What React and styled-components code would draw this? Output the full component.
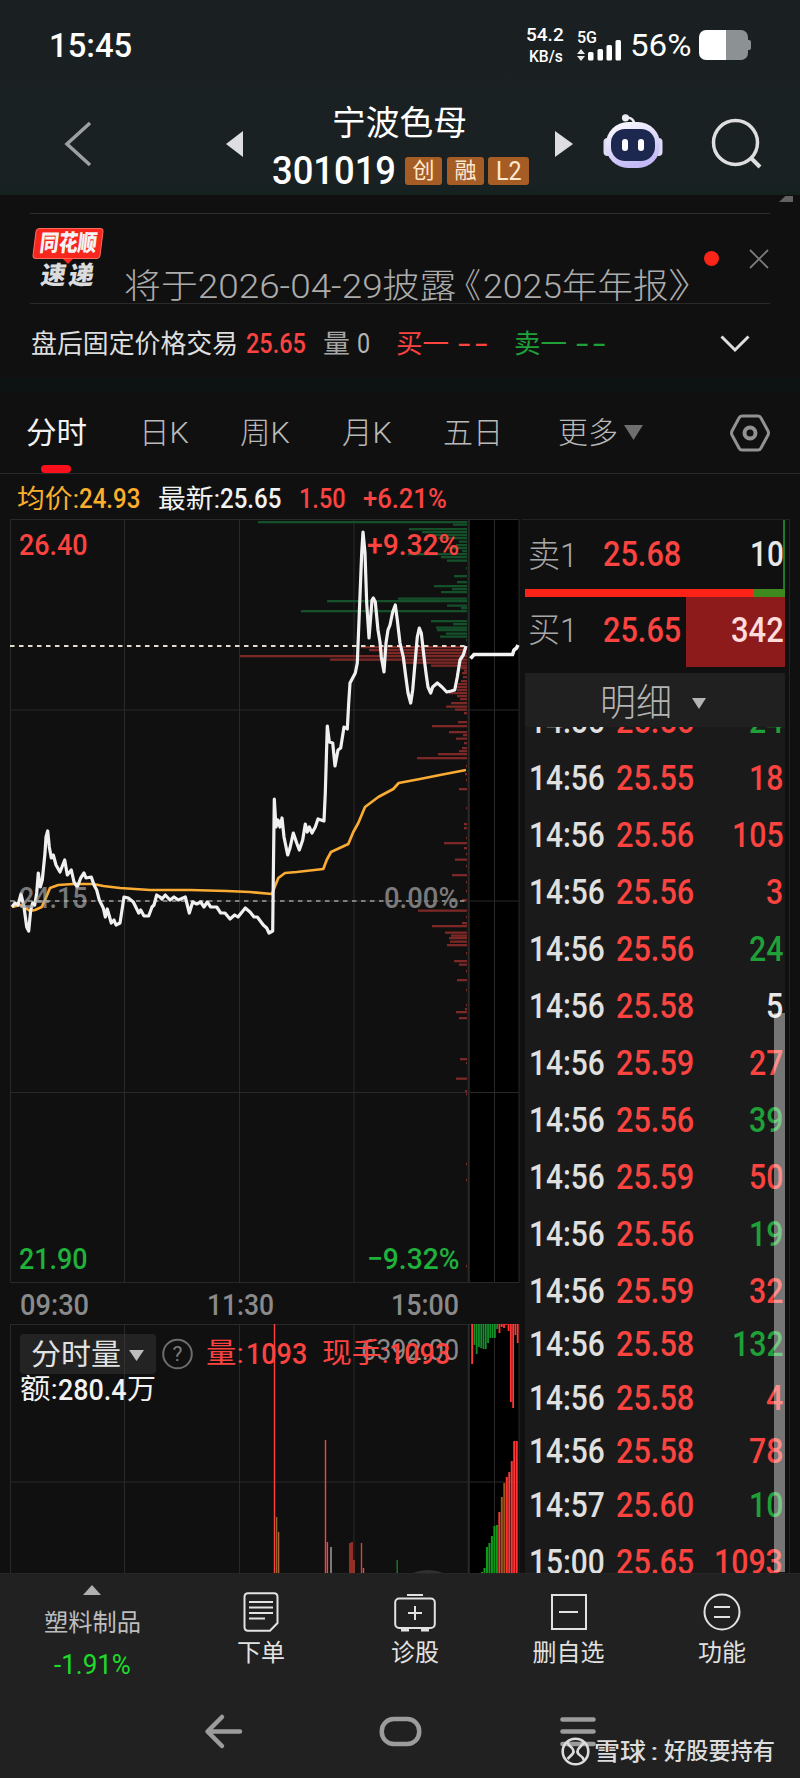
import { useLayoutEffect, useRef, useState } from 'react';
import styled, { createGlobalStyle } from 'styled-components';

const RED = '#fb4340';
const GREEN = '#1fa038';

const GlobalStyle = createGlobalStyle`
  * {
    box-sizing: border-box;
  }

  body {
    margin: 0;
    background: #101010;
    font-family: Roboto, 'Noto Sans CJK SC', sans-serif;
    color: #e8e8e8;
  }

  svg {
    display: block;
    flex: none;
  }
`;

const Page = styled.div`
  width: 800px;
  height: 1778px;
  overflow: hidden;
  display: flex;
  flex-direction: column;
`;

/* condensed text: squeezed to a fixed column width */
const FitBox = styled.span`
  flex: none;
  display: block;
  width: ${(p) => p.$w}px;
  margin-left: ${(p) => p.$ml || 0}px;
  color: ${(p) => p.$color || 'inherit'};
  font-size: ${(p) => p.$size}px;
  font-weight: ${(p) => p.$weight || 400};
  line-height: ${(p) => p.$size + 4}px;
  height: ${(p) => p.$size + 4}px;
`;

const FitText = styled.span`
  display: inline-block;
  white-space: nowrap;
  transform-origin: 0 50%;
`;

const Fit = ({ w, ml, size, color, weight, children }) => {
  const ref = useRef(null);
  const [scale, setScale] = useState(1);

  useLayoutEffect(() => {
    setScale(w / ref.current.offsetWidth);
  }, [w, children]);

  return (
    <FitBox $w={w} $ml={ml} $size={size} $color={color} $weight={weight}>
      <FitText ref={ref} style={{ transform: `scaleX(${scale})` }}>
        {children}
      </FitText>
    </FitBox>
  );
};

const Header = styled.header`
  height: 195px;
  flex: none;
  background: linear-gradient(#1a2022 0, #1a2123 180px, #14211f 195px);
  color: #fff;
`;

const StatusBar = styled.div`
  height: 89px;
  display: flex;
  align-items: center;
  padding-left: 49px;
`;

const NetSpeed = styled.div`
  width: 38px;
  margin-left: 394px;
`;

const Cell = styled.div`
  width: 46px;
  margin-left: 12px;
`;

const Battery = styled.div`
  width: 49px;
  height: 30px;
  margin-left: 8px;
  border-radius: 7px;
  background: linear-gradient(90deg, #fff 27px, #8c9194 27px);
`;

const BatteryCap = styled.div`
  width: 2.5px;
  height: 10px;
  border-radius: 0 2px 2px 0;
  background: #8c9194;
`;

const TitleBar = styled.div`
  height: 106px;
  display: flex;
  align-items: flex-start;
  padding-left: 64px;
`;

const HeadIcon = styled.div`
  margin-left: ${(p) => p.$ml || 0}px;
  margin-top: ${(p) => p.$mt}px;
`;

const Stock = styled.div`
  width: 258px;
  margin-left: 29px;
  padding-top: 15px;
`;

const StockName = styled.div`
  padding-left: 60px;
`;

const StockCode = styled.div`
  display: flex;
  align-items: center;
  height: 44px;
  margin-top: 7px;
`;

const Badge = styled.div`
  width: ${(p) => p.$w}px;
  height: 28px;
  margin-left: ${(p) => p.$ml}px;
  border-radius: 3px;
  background: #a65d25;
  color: #ffe9d0;
  display: flex;
  align-items: center;
  justify-content: center;
`;

const Notice = styled.div`
  position: relative;
  height: 109px;
  flex: none;
  display: flex;
  align-items: flex-start;
  padding: 18px 30px 0;
`;

const NoticeInner = styled.div`
  width: 740px;
  height: 91px;
  display: flex;
  align-items: flex-start;
  border-top: 1px solid #2d2d2d;
  border-bottom: 1px solid #2a2a2a;
`;

const Corner = styled.div`
  position: absolute;
  top: 1px;
  right: 7px;
  width: 14px;
  height: 6px;
  background: #626262;
  clip-path: polygon(0 100%, 45% 0, 100% 0, 100% 100%);
`;

const Logo = styled.div`
  width: 72px;
  margin: 14px 0 0 2px;
  display: flex;
  flex-direction: column;
  align-items: center;
`;

const LogoTop = styled.div`
  width: 68px;
  height: 31px;
  border-radius: 4px;
  border: 1px solid #ff6a5c;
  background: #f8261c;
  transform: skewX(-7deg);
  display: flex;
  justify-content: center;
  align-items: center;
`;

const LogoTip = styled.div`
  border: 5px solid transparent;
  border-top-color: #f8261c;
  border-bottom: 0;
`;

const LogoBottom = styled.div`
  display: flex;
  transform: skewX(-9deg);
  margin: -3px 2px 0 0;
`;

const NoticeText = styled.div`
  display: flex;
  padding: 53px 0 0 20px;
`;

const Dot = styled.div`
  width: 15px;
  height: 15px;
  margin: 37px 0 0 -8px;
  border-radius: 50%;
  background: #fb2418;
`;

const AfterHours = styled.div`
  height: 74px;
  flex: none;
  display: flex;
  align-items: center;
  padding: 6px 0 0 30px;
`;

const Band = styled.div`
  height: 14px;
  flex: none;
  background: #0d1312;
`;

const Tabs = styled.div`
  height: 82px;
  flex: none;
  display: flex;
  align-items: center;
  padding-left: 26px;
  border-bottom: 1px solid #2b2b2b;
  color: #b9b9b9;
`;

const ActiveTab = styled.div`
  height: 81px;
  display: flex;
  flex-direction: column;
  padding-top: 24px;

  &::after {
    content: '';
    width: 30px;
    height: 8px;
    margin: auto 0 0 15px;
    border-radius: 4px;
    background: #fb0f1c;
  }
`;

const Stats = styled.div`
  height: 45px;
  flex: none;
  display: flex;
  align-items: center;
  padding: 4px 0 0 17px;
`;

const Main = styled.main`
  height: 1054px;
  flex: none;
  display: flex;
`;

const Left = styled.div`
  width: 522px;
  flex: none;
`;

const ChartBox = styled.div`
  position: relative;
  height: ${(p) => p.$h}px;
`;

const ChartLabel = styled.div`
  position: absolute;
  top: ${(p) => p.$top}px;
  left: ${(p) => p.$left}px;
`;

const Axis = styled.div`
  height: 41px;
  display: flex;
  align-items: center;
  padding: 3px 0 0 20px;
`;

const VolumeHead = styled.div`
  position: absolute;
  top: 10px;
  left: 20px;
`;

const VolumeRow = styled.div`
  display: flex;
  align-items: center;
  height: ${(p) => p.$h}px;
`;

const Select = styled.div`
  width: 136px;
  height: 40px;
  display: flex;
  align-items: center;
  padding: 2px 0 0 11px;
  border-radius: 4px;
  background: rgba(60, 60, 60, 0.45);
`;

const Right = styled.div`
  width: 268px;
  padding-left: 2.5px;
  border-top: 1px solid #222;
  border-right: 1px solid #242424;
`;

const Quote = styled.div`
  width: 260px;
  height: ${(p) => p.$h}px;
  display: flex;
  align-items: center;
  padding: 0 0 0 3px;
  border-right: 2px solid ${(p) => p.$edge || 'transparent'};
`;

const QuoteVol = styled.div`
  width: 99px;
  height: 100%;
  margin-left: auto;
  margin-right: -2px;
  padding-right: 1px;
  display: flex;
  align-items: center;
  justify-content: flex-end;
  background: ${(p) => p.$bg || 'none'};
`;

const RatioBar = styled.div`
  width: 260px;
  height: 8px;
  background: linear-gradient(90deg, #fb2218 228px, #3f8a1f 228px);
`;

/* lifts the line a little above the middle of its row */
const Raised = styled.div`
  padding-bottom: 4px;
`;

const DetailHead = styled.div`
  width: 260px;
  height: 54px;
  margin-top: 6px;
  padding: 7px 0 0 75px;
  display: flex;
  align-items: center;
  background: #202020;
  color: #b4b4b4;
`;

const Trades = styled.div`
  position: relative;
  width: 260px;
  height: 846px;
  overflow: hidden;
  background: #1a1a1a;
`;

const Trade = styled.div`
  display: flex;
  align-items: center;
  height: 46px;
  margin-top: ${(p) => p.$gap}px;
  padding: 0 1px 0 4px;
`;

const TradeVol = styled.div`
  margin-left: auto;
`;

const ScrollThumb = styled.div`
  position: absolute;
  right: 0;
  top: 286px;
  bottom: 1px;
  width: 11px;
  background: rgba(255, 255, 255, 0.4);
`;

const Toolbar = styled.footer`
  height: 120px;
  flex: none;
  display: flex;
  background: #212121;
  border-top: 1px solid #262626;
`;

const Tool = styled.div`
  width: ${(p) => p.$w}px;
  display: flex;
  flex-direction: column;
  align-items: center;
  padding-top: ${(p) => p.$top}px;
`;

const ToolIcon = styled.div`
  height: 47px;
`;

const SystemBar = styled.div`
  flex: 1;
  position: relative;
  display: flex;
  align-items: flex-start;
  padding: 20px 0 0 204px;
  background: #212121;
`;

const Watermark = styled.div`
  position: absolute;
  left: 560px;
  top: 43px;
  display: flex;
  align-items: center;
  color: #dcdcdc;
`;

const trades = [
  ['14:56', '25.56', '24', GREEN],
  ['14:56', '25.55', '18', RED],
  ['14:56', '25.56', '105', RED],
  ['14:56', '25.56', '3', RED],
  ['14:56', '25.56', '24', GREEN],
  ['14:56', '25.58', '5', '#e8e8e8'],
  ['14:56', '25.59', '27', RED],
  ['14:56', '25.56', '39', GREEN],
  ['14:56', '25.59', '50', RED],
  ['14:56', '25.56', '19', GREEN],
  ['14:56', '25.59', '32', RED],
  ['14:56', '25.58', '132', GREEN],
  ['14:56', '25.58', '4', RED],
  ['14:56', '25.58', '78', RED],
  ['14:57', '25.60', '10', GREEN],
  ['15:00', '25.65', '1093', RED],
];

const tradeGap = (i) => {
  if (i === 0) return -28.5;
  return i > 10 && i < 15 ? 7.4 : 11;
};

const pricePoints =
  '12,907 15,903 18,905 21,894 24,907 26.7,927 28.7,931 30.7,910 32.7,903 34.7,905 36.7,893 38.3,873 40.3,887 42.3,880 45,853 46,837 47.7,831 49.3,847 51.3,858 53.3,855 56,865 60,872 64.7,860 67.3,875 71.3,870 74,882 77.3,887 80.7,878 84,873 86,878 91.3,877 94,885 96.7,890 99.3,900 103.3,908 105.3,917 107.3,909 111.3,923 114,920 116,925 120,923 122,910 124,897 128.3,898 133.3,902 138.7,913 140.7,910 144,916 148.7,916 152,907 154,905 156.7,895 160,897 162,899 165.3,895 170,900 174,897 178.3,900 185.3,897 189.3,913 192.7,902 196.7,904 200.7,902 204,907 207.3,902 210.7,907 216.7,907 220.7,913 225,913 230,919 234.7,915 238,917 245.3,908 250,912 254,917 257.3,917 263.3,925 266.7,928 269,933 272.7,931 273.3,877 274.3,799 276,827 278,820 280,827 282,818 284,837 287.7,855 290,848 293.3,833 296.7,843 299.3,850 302.7,840 305.3,824 307.3,832 309.3,827 312,833 315.3,827 318,819 324,821 325.3,793 327.3,726 329.3,742 332.7,743 335,766 338,750 340.7,748 344,727 347.3,729 348.7,703 350,683 355.3,673 357.3,663 359.3,613 361.7,553 363,532 365,553 366.7,603 369,638 370.7,617 372,600 373.3,598 375.3,602 378,630 380,642 381.3,657 384,672 386,643 388,630 390,625 392.7,612 395.3,605 397.3,620 400,643 403.3,657 405.3,673 408,693 410.7,703 412.7,690 415.3,660 417.3,637 419.3,628 421.3,633 424,657 426,673 428,687 430.7,693 432.7,687 437.3,683 442,687 446.7,692 451.3,691 454.7,690 457.3,677 460,660 463.3,655 466,646';

const avgPoints =
  '12,907 20,905 24,907 30,911 35,910 41.7,907 45,900 50,888 58.3,885 73.3,884 93.3,884 103.3,886 120,888 150,890 190,890 226.7,891 250,892 272,894 274.7,887 278.3,878 285,873 296.7,872 323.3,869 326.7,860 331,852 348.3,844 353.3,832 358.3,823 365,807 378.3,797 393.3,789 398.7,783 420,779 440,775 466,770';

// [y, left edge] of each horizontal chip bar, all ending at x = 467
const greenChips = [
  [522, 258], [524.5, 453], [529, 409], [532, 422], [535, 430], [538, 438], [541.5, 459], [545, 456], [548, 448],
  [551, 462], [554, 408], [557, 441], [560.5, 447], [568, 466], [576, 454], [582, 457], [586, 434], [589, 452],
  [592, 441], [598.5, 398], [601, 327], [605.5, 447], [608, 461], [611, 301], [621, 431], [624, 453], [627.5, 436],
  [630, 437], [633.5, 446], [636.5, 440], [640, 466],
];
const redChips = [
  [647, 361], [650, 369], [653, 380], [656, 240], [659.5, 330], [662.5, 402], [665.5, 431], [668, 461], [670.5, 464],
  [673, 462], [677, 463], [681, 461], [684, 458], [687, 456], [690, 457], [693, 449], [696, 457], [699, 460],
  [703, 451], [706.5, 446], [709.5, 455], [713, 464], [722, 458], [726, 432], [732, 449], [735, 463], [738.5, 456],
  [743, 464], [748, 462], [751, 459], [754, 438], [758, 417], [766, 466], [774, 465], [780, 466], [789, 459],
  [808, 466], [824, 464], [828, 464], [838, 466], [843, 444], [848, 464], [854, 466], [859.5, 455], [866, 466],
  [875, 452], [882, 466], [891, 466], [900, 462], [910.5, 418], [917, 466], [923, 462], [926, 432], [932.5, 445],
  [935.5, 451], [938, 449], [941.5, 450], [945, 447], [953, 466], [961, 454], [964.5, 459], [971, 466], [980, 457],
  [990, 466], [1005, 466], [1009, 465], [1012, 456], [1018, 459], [1059, 460], [1063, 466], [1078.5, 456],
  [1091, 465], [1094, 466], [1164, 466], [1180, 466], [1266, 466],
];

const upper = [
  1364, 1345, 1354, 1347, 1348, 1349, 1349, 1343, 1338, 1338, 1338, 1329, 1333, 1327, 1328, 1325, 1331, 1402, 1408,
  1335, 1343,
];
const lower = [1572, 1568, 1547, 1543, 1536, 1526, 1525, 1512, 1497, 1483, 1477, 1472, 1461, 1441, 1441];

const lowerColor = (i) => {
  if (i < 7) return '#0f9a1c';
  return i === 8 || i === 9 ? '#9a5a1c' : '#ff3734';
};

// [x, top, color]
const volumes = [
  [274.5, 1324, RED],
  [276.6, 1517, '#8a6a28'],
  [278.6, 1532, '#b0633a'],
  [325.5, 1440, RED],
  [327.4, 1542, RED],
  [331, 1547, '#a8a8a8'],
  [350, 1543, '#d23a32'],
  [352, 1542, '#d23a32'],
  [354, 1560, '#b8452e'],
  [361.5, 1543, '#d2463a'],
  [363.5, 1568, RED],
  [397.2, 1560, '#1c7a2a'],
];

const PriceChart = () => (
  <svg width="522" height="764" viewBox="0 519 522 764">
    <rect x="470" y="519" width="49" height="764" fill="#000" />
    <g stroke="#292929" fill="none">
      <path d="M10.5 519.5H519V1282.5H10.5Z" />
      <path d="M10 710H519M10 901H519M10 1092.5H519" />
      <path d="M124.5 519V1283M239.5 519V1283M354 519V1283M494.5 519V1283" />
      <path d="M468.7 519V1283" strokeWidth="2" />
    </g>
    <g fill="#14502a">
      {greenChips.map(([y, x]) => (
        <rect key={y} x={x} y={y - 1} width={467 - x} height="2.3" />
      ))}
    </g>
    <g fill="#7c2826">
      {redChips.map(([y, x]) => (
        <rect key={y} x={x} y={y - 1} width={467 - x} height="2.3" />
      ))}
    </g>
    <path d="M10 646H467" stroke="#e4dccb" strokeWidth="1.8" strokeDasharray="4.5 4.5" />
    <path d="M10 901H467" stroke="#a0a0a0" strokeWidth="1.5" strokeDasharray="4.5 4.5" />
    <polyline points={avgPoints} fill="none" stroke="#f9ab33" strokeWidth="2.7" strokeLinejoin="round" />
    <polyline points={pricePoints} fill="none" stroke="#f0f0f0" strokeWidth="3.2" strokeLinejoin="round" />
    <path
      d="M470.5 658.5L474 654.5H512.5L514 650L516.5 648L518 645"
      fill="none"
      stroke="#f4f4f4"
      strokeWidth="3.6"
    />
  </svg>
);

const VolumeChart = () => (
  <svg width="522" height="249" viewBox="0 1324 522 249">
    <rect x="470" y="1324" width="49" height="249" fill="#000" />
    <g stroke="#292929" fill="none">
      <path d="M10.5 1573V1324.5H519V1573" />
      <path d="M10 1482H519" />
      <path d="M124.5 1324V1573M239.5 1324V1573M354 1324V1573M494.5 1324V1573" />
      <path d="M468.7 1324V1573" strokeWidth="2" />
    </g>
    <ellipse cx="428" cy="1590" rx="28" ry="20" fill="#303030" />
    {volumes.map(([x, y, color]) => (
      <rect key={x} x={x - 0.7} y={y} width="1.4" height={1573 - y} fill={color} />
    ))}
    {upper.map((y, i) => (
      <rect
        key={i}
        x={471.2 + i * 2.28}
        y="1324"
        width="1.8"
        height={y - 1324}
        fill={i > 0 && i < 12 ? '#138f2b' : '#ff3734'}
      />
    ))}
    {lower.map((y, i) => (
      <rect key={i} x={481 + i * 2.48} y={y} width="2" height={1573 - y} fill={lowerColor(i)} />
    ))}
  </svg>
);

const Robot = () => (
  <svg width="60" height="56" viewBox="0 0 60 56">
    <defs>
      <linearGradient id="shell" x1="0" y1="0" x2="0.4" y2="1">
        <stop offset="0" stopColor="#ffffff" />
        <stop offset="0.6" stopColor="#dcd6fa" />
        <stop offset="1" stopColor="#c3baf6" />
      </linearGradient>
    </defs>
    <path d="M31 12C32 6 28 3 23 4" fill="none" stroke="#e9e9f2" strokeWidth="2.5" />
    <circle cx="22.5" cy="3.8" r="3.6" fill="#ececf4" />
    <rect x="0.5" y="24" width="8" height="18" rx="4" fill="#dedcf4" />
    <rect x="51.5" y="24" width="8" height="18" rx="4" fill="#dedcf4" />
    <rect x="3" y="8" width="54" height="46" rx="22" fill="url(#shell)" />
    <rect x="8" y="15" width="44" height="32" rx="14" fill="#1d2850" />
    <rect x="19" y="25" width="6" height="12" rx="3" fill="#fff" />
    <rect x="35" y="25" width="6" height="12" rx="3" fill="#fff" />
  </svg>
);

const Triangle = ({ color, w, h, up }) => (
  <svg width={w} height={h} viewBox="0 0 10 10" preserveAspectRatio="none">
    <path d={up ? 'M0 10L5 0L10 10Z' : 'M0 0L5 10L10 0Z'} fill={color} />
  </svg>
);

const Spacer = styled.div`
  flex: none;
  width: ${(p) => p.$w || 0}px;
  height: ${(p) => p.$h || 0}px;
`;

const App = () => (
  <Page>
    <GlobalStyle />
    <Header>
      <StatusBar>
        <Fit w={83} size={34} weight={500}>15:45</Fit>
        <NetSpeed>
          <Fit w={38} size={19} weight={500}>54.2</Fit>
          <Spacer $h={-5} />
          <Fit w={34} size={17} weight={500} ml={3}>KB/s</Fit>
        </NetSpeed>
        <Cell>
          <svg width="46" height="34" viewBox="576 27 46 34">
            <text
              x="577"
              y="42"
              fill="#fff"
              fontFamily="Roboto, sans-serif"
              fontSize="17"
              fontWeight="500"
              textLength="20"
              lengthAdjust="spacingAndGlyphs"
            >
              5G
            </text>
            <path d="M577 53L581 48L585 53ZM577 55L581 60L585 55Z" fill="#e8e8e8" />
            <rect x="588" y="51" width="5.5" height="8.5" rx="1.5" fill="#fff" />
            <rect x="597.5" y="48" width="5.5" height="11.5" rx="1.5" fill="#fff" />
            <rect x="606.5" y="44" width="5.5" height="15.5" rx="1.5" fill="#fff" />
            <rect x="615.5" y="39" width="5.5" height="20.5" rx="1.5" fill="#fff" />
          </svg>
        </Cell>
        <Fit w={61} size={32} ml={8}>56%</Fit>
        <Battery />
        <BatteryCap />
      </StatusBar>
      <TitleBar>
        <HeadIcon $mt={32}>
          <svg width="28" height="46" viewBox="0 0 28 46">
            <path d="M26 2L3 23L26 44" fill="none" stroke="#9d9fa0" strokeWidth="3.5" />
          </svg>
        </HeadIcon>
        <HeadIcon $ml={134} $mt={42}>
          <svg width="17" height="26" viewBox="0 0 17 26">
            <path d="M17 0V26L0 13Z" fill="#dedde0" />
          </svg>
        </HeadIcon>
        <Stock>
          <StockName>
            <Fit w={135} size={34}>宁波色母</Fit>
          </StockName>
          <StockCode>
            <Fit w={124} size={39} weight={500}>301019</Fit>
            <Badge $w={37} $ml={9}>
              <Fit w={22} size={22}>创</Fit>
            </Badge>
            <Badge $w={37} $ml={5}>
              <Fit w={22} size={22}>融</Fit>
            </Badge>
            <Badge $w={41} $ml={4}>
              <Fit w={26} size={25}>L2</Fit>
            </Badge>
          </StockCode>
        </Stock>
        <HeadIcon $ml={25} $mt={42}>
          <svg width="18" height="26" viewBox="0 0 18 26">
            <path d="M0 0V26L18 13Z" fill="#dedde0" />
          </svg>
        </HeadIcon>
        <HeadIcon $ml={30} $mt={25}>
          <Robot />
        </HeadIcon>
        <HeadIcon $ml={48} $mt={29}>
          <svg width="52" height="52" viewBox="0 0 52 52">
            <circle cx="24.5" cy="24.5" r="22" fill="none" stroke="#dedede" strokeWidth="3.5" />
            <path d="M40 40L49 49" stroke="#dedede" strokeWidth="4" />
          </svg>
        </HeadIcon>
      </TitleBar>
    </Header>

    <Notice>
      <NoticeInner>
        <Logo>
          <LogoTop>
            <Fit w={57} size={23} weight={900} color="#f4f4f4">同花顺</Fit>
          </LogoTop>
          <LogoTip />
          <LogoBottom>
            <Fit w={25} size={25} weight={900} color="#dcdcdc">速</Fit>
            <Fit w={25} size={25} weight={900} color="#dcdcdc" ml={3}>递</Fit>
          </LogoBottom>
        </Logo>
        <NoticeText>
          <Fit w={332} size={34} weight={300} color="#acacac">将于2026-04-29披露</Fit>
          <Fit w={33} size={34} weight={300} color="#acacac" ml={-8}>《</Fit>
          <Fit w={185} size={34} weight={300} color="#acacac" ml={2}>2025年年报</Fit>
          <Fit w={44} size={34} weight={300} color="#acacac">》</Fit>
        </NoticeText>
        <Dot />
        <Spacer $w={30} />
        <HeadIcon $mt={35}>
          <svg width="20" height="20" viewBox="0 0 20 20">
            <path d="M1 1L19 19M19 1L1 19" stroke="#7a7a7a" strokeWidth="1.8" />
          </svg>
        </HeadIcon>
      </NoticeInner>
      <Corner />
    </Notice>

    <AfterHours>
      <Fit w={207} size={26} color="#dedede" ml={1}>盘后固定价格交易</Fit>
      <Fit w={60} size={27} weight={500} color={RED} ml={8}>25.65</Fit>
      <Fit w={27} size={26} color="#a6a6a6" ml={17}>量</Fit>
      <Fit w={13} size={27} color="#b4b4b4" ml={7}>0</Fit>
      <Fit w={53} size={26} color={RED} ml={26}>买一</Fit>
      <Fit w={30} size={30} color={RED} ml={9}>-&#8202;-</Fit>
      <Fit w={53} size={26} color={GREEN} ml={26}>卖一</Fit>
      <Fit w={30} size={30} color={GREEN} ml={9}>-&#8202;-</Fit>
      <Spacer $w={114} />
      <svg width="30" height="18" viewBox="0 0 30 18">
        <path d="M1.5 1.5L15 15L28.5 1.5" fill="none" stroke="#dedede" strokeWidth="3" />
      </svg>
    </AfterHours>
    <Band />

    <Tabs>
      <ActiveTab>
        <Fit w={61} size={30} color="#f2f2f2">分时</Fit>
      </ActiveTab>
      <Fit w={50} size={30} weight={300} ml={52}>日K</Fit>
      <Fit w={50} size={30} weight={300} ml={51}>周K</Fit>
      <Fit w={50} size={30} weight={300} ml={52}>月K</Fit>
      <Fit w={60} size={30} weight={300} ml={51}>五日</Fit>
      <Fit w={60} size={30} weight={300} ml={55}>更多</Fit>
      <Spacer $w={6} />
      <Triangle w={19} h={15} color="#6e6e6e" />
      <Spacer $w={87} />
      <svg width="40" height="38" viewBox="0 0 40 38">
        <path
          d="M12 2H28Q30 2 31 4L38 17Q39 19 38 21L31 34Q30 36 28 36H12Q10 36 9 34L2 21Q1 19 2 17L9 4Q10 2 12 2Z"
          fill="none"
          stroke="#929292"
          strokeWidth="3"
        />
        <circle cx="20" cy="19" r="5.5" fill="none" stroke="#929292" strokeWidth="4" />
      </svg>
    </Tabs>

    <Stats>
      <Fit w={62} size={26} color="#fbae2c">均价:</Fit>
      <Fit w={61} size={28} weight={500} color="#fbae2c">24.93</Fit>
      <Fit w={62} size={26} color="#f2f2f2" ml={18}>最新:</Fit>
      <Fit w={61} size={28} weight={500} color="#f2f2f2">25.65</Fit>
      <Fit w={47} size={28} weight={500} color={RED} ml={18}>1.50</Fit>
      <Fit w={84} size={28} weight={500} color={RED} ml={17}>+6.21%</Fit>
    </Stats>

    <Main>
      <Left>
        <ChartBox $h={764}>
          <PriceChart />
          <ChartLabel $top={9} $left={19}>
            <Fit w={69} size={30} weight={500} color={RED}>26.40</Fit>
          </ChartLabel>
          <ChartLabel $top={9} $left={367}>
            <Fit w={92} size={30} weight={500} color={RED}>+9.32%</Fit>
          </ChartLabel>
          <ChartLabel $top={362} $left={19}>
            <Fit w={69} size={30} weight={500} color="rgba(170,170,170,.7)">24.15</Fit>
          </ChartLabel>
          <ChartLabel $top={362} $left={384}>
            <Fit w={75} size={30} weight={500} color="#7a7a7a">0.00%</Fit>
          </ChartLabel>
          <ChartLabel $top={723} $left={19}>
            <Fit w={69} size={30} weight={500} color="#1fb13c">21.90</Fit>
          </ChartLabel>
          <ChartLabel $top={723} $left={367}>
            <Fit w={92} size={30} weight={500} color="#1fb13c">−9.32%</Fit>
          </ChartLabel>
        </ChartBox>
        <Axis>
          <Fit w={69} size={30} weight={500} color="#8a8a8a">09:30</Fit>
          <Fit w={67} size={30} weight={500} color="#8a8a8a" ml={118}>11:30</Fit>
          <Fit w={68} size={30} weight={500} color="#8a8a8a" ml={117}>15:00</Fit>
        </Axis>
        <ChartBox $h={249}>
          <VolumeChart />
          <ChartLabel $top={9} $left={361}>
            <Fit w={98} size={30} color="#8a8a8a">6392.00</Fit>
          </ChartLabel>
          <VolumeHead>
            <VolumeRow $h={40}>
              <Select>
                <Fit w={90} size={29} color="#e2e2e2">分时量</Fit>
                <Spacer $w={8} />
                <Triangle w={15} h={11} color="#bdbdbd" />
              </Select>
              <Spacer $w={6} />
              <svg width="32" height="32" viewBox="0 0 32 32">
                <circle cx="15.5" cy="16" r="14.3" fill="none" stroke="#6d6d6d" strokeWidth="2" />
                <text x="15.5" y="23" textAnchor="middle" fill="#7d7d7d" fontFamily="Roboto, sans-serif" fontSize="21">
                  ?
                </text>
              </svg>
              <Fit w={38} size={28} color={RED} ml={12}>量:</Fit>
              <Fit w={61} size={30} weight={500} color={RED} ml={2}>1093</Fit>
              <Fit w={67} size={28} color={RED} ml={15}>现手:</Fit>
              <Fit w={61} size={30} weight={500} color={RED}>1093</Fit>
            </VolumeRow>
            <VolumeRow $h={31}>
              <Fit w={38} size={28} color="#f2f2f2">额:</Fit>
              <Fit w={69} size={30} weight={500} color="#f2f2f2">280.4</Fit>
              <Fit w={29} size={28} color="#f2f2f2">万</Fit>
            </VolumeRow>
          </VolumeHead>
        </ChartBox>
      </Left>

      <Right>
        <Quote $h={69} $edge="#1d7a2c">
          <Fit w={50} size={34} weight={300} color="#a8a8a8">卖1</Fit>
          <Fit w={78} size={35} weight={500} color={RED} ml={25}>25.68</Fit>
          <QuoteVol>
            <Fit w={34} size={35} weight={500}>10</Fit>
          </QuoteVol>
        </Quote>
        <RatioBar />
        <Quote $h={70}>
          <Raised>
            <Fit w={50} size={34} weight={300} color="#a8a8a8">买1</Fit>
          </Raised>
          <Raised>
            <Fit w={78} size={35} weight={500} color={RED} ml={25}>25.65</Fit>
          </Raised>
          <QuoteVol $bg="#8e1b1b">
            <Raised>
              <Fit w={53} size={35} weight={500} color="#ffdcdc">342</Fit>
            </Raised>
          </QuoteVol>
        </Quote>
        <DetailHead>
          <Fit w={72} size={37} weight={300}>明细</Fit>
          <Spacer $w={20} />
          <Triangle w={14} h={11} color="#b4b4b4" />
        </DetailHead>
        <Trades>
          {trades.map(([time, price, vol, color], i) => (
            <Trade key={i} $gap={tradeGap(i)}>
              <Fit w={76} size={35} weight={500} color="#e0e0e0">{time}</Fit>
              <Fit w={78} size={35} weight={500} color={RED} ml={11}>{price}</Fit>
              <TradeVol>
                <Fit w={vol.length * 17.3} size={35} weight={500} color={color}>{vol}</Fit>
              </TradeVol>
            </Trade>
          ))}
          <ScrollThumb />
        </Trades>
      </Right>
    </Main>

    <Toolbar>
      <Tool $w={184} $top={11}>
        <Triangle up w={18} h={10} color="#b0b0b0" />
        <Spacer $h={14} />
        <Fit w={97} size={24} color="#bdbdbd">塑料制品</Fit>
        <Spacer $h={12} />
        <Fit w={77} size={28} color="#1ddb2a">-1.91%</Fit>
      </Tool>
      <Tool $w={154} $top={18}>
        <ToolIcon>
          <svg width="36" height="40" viewBox="0 0 36 40" fill="none" stroke="#e2e2e2" strokeWidth="2">
            <path d="M5 1.2H31Q34.5 1.2 34.5 5V31L27 38.8H5Q1.5 38.8 1.5 35V5Q1.5 1.2 5 1.2Z" />
            <path d="M6 10H30M6 15.5H30M6 21H30M6 26.5H22" />
          </svg>
        </ToolIcon>
        <Fit w={48} size={24} color="#e2e2e2">下单</Fit>
      </Tool>
      <Tool $w={154} $top={18}>
        <ToolIcon>
          <svg width="42" height="40" viewBox="0 0 42 40" fill="none" stroke="#e2e2e2" strokeWidth="2">
            <rect x="1.2" y="6.5" width="39.6" height="29.5" rx="4" />
            <path d="M13 3H29M14 21H28M21 14V28" />
            <path d="M7 38H15M27 38H35" strokeWidth="3" />
          </svg>
        </ToolIcon>
        <Fit w={48} size={24} color="#e2e2e2">诊股</Fit>
      </Tool>
      <Tool $w={153} $top={18}>
        <ToolIcon>
          <svg width="36" height="40" viewBox="0 0 36 40" fill="none" stroke="#e2e2e2" strokeWidth="2">
            <rect x="1" y="3" width="34" height="34" />
            <path d="M8 20H27" />
          </svg>
        </ToolIcon>
        <Fit w={72} size={24} color="#e2e2e2">删自选</Fit>
      </Tool>
      <Tool $w={154} $top={18}>
        <ToolIcon>
          <svg width="38" height="40" viewBox="0 0 38 40" fill="none" stroke="#e2e2e2" strokeWidth="2">
            <circle cx="19" cy="20" r="17.5" />
            <path d="M11 15H27M11 25H27" />
          </svg>
        </ToolIcon>
        <Fit w={48} size={24} color="#e2e2e2">功能</Fit>
      </Tool>
    </Toolbar>

    <SystemBar>
      <svg width="40" height="38" viewBox="0 0 40 38" fill="none" stroke="#9c9c9c" strokeWidth="4.5">
        <path d="M18 4L3.5 18.5L18 33M4 18.5H36" strokeLinecap="round" strokeLinejoin="round" />
      </svg>
      <Spacer $w={135} />
      <svg width="43" height="38" viewBox="0 0 43 38" fill="none" stroke="#9c9c9c" strokeWidth="4.5">
        <rect x="2.8" y="6" width="37.4" height="25" rx="12" />
      </svg>
      <Spacer $w={138} />
      <svg width="36" height="38" viewBox="0 0 36 38" stroke="#9c9c9c" strokeWidth="4.6" strokeLinecap="round">
        <path d="M2.5 6.5H33.5M2.5 18.5H33.5M2.5 31H33.5" />
      </svg>
      <Watermark>
        <svg width="31" height="31" viewBox="0 0 31 31" fill="none" stroke="#dcdcdc" strokeWidth="2.6">
          <circle cx="15.5" cy="15.5" r="12.8" />
          <path d="M7 5.5Q8 9 12 12Q15 15.5 12 18.5L7.5 23M24.5 6L19 12Q16 15.5 19 18.5Q23 21 24.5 25" />
        </svg>
        <Fit w={26} size={24} ml={3} weight={500}>雪</Fit>
        <Fit w={26} size={24} weight={500}>球</Fit>
        <Fit w={9} size={24} ml={4}>:</Fit>
        <Fit w={111} size={23} ml={5} weight={500}>好股要持有</Fit>
      </Watermark>
    </SystemBar>
  </Page>
);

export default App;
